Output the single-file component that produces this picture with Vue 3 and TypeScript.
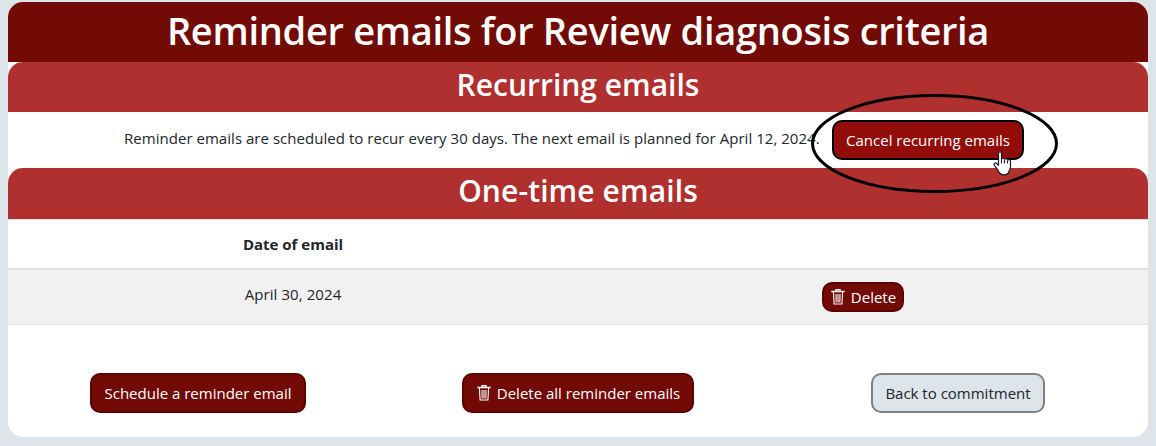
<script setup lang="ts">
const recurrence = { days: 30, next: 'April 12, 2024' }
const reminders: string[] = ['April 30, 2024']
</script>

<template>
  <main class="page">
    <section class="card">
      <h1><span>Reminder emails for Review diagnosis criteria</span></h1>
      <h2><span>Recurring emails</span></h2>
      <div class="recurring">
        <p>Reminder emails are scheduled to recur every {{ recurrence.days }} days. The next email is planned for {{ recurrence.next }}.</p>
        <div class="cancel-wrap">
          <button class="btn cancel"><span>Cancel recurring emails</span></button>
          <svg class="ring" width="252" height="104" viewBox="0 0 252 104">
            <ellipse cx="125.5" cy="51.5" rx="122" ry="48" fill="none" stroke="#000" stroke-width="3" />
          </svg>
          <svg class="pointer" width="20" height="26" viewBox="0 0 20 26">
            <path d="M5.500 2.200C5.500.3 8.500.3 8.500 2.200V8c.3-1.400 3-1.300 3 .4.4-1.200 3-1 3 .8.500-1 3-.8 3 1V16c0 2-1.200 3.200-1.700 5-.5 1.800-2.800 2.800-4.800 2.800s-4.200-1-5-2.800C5 18.500 2.800 16.500 1.300 14.200.4 12.400 2.200 11.200 3.800 12.500l1.700 1.600z" fill="#fff" stroke="#1c1c2c" stroke-width="1.200" />
            <path d="M8.500 8v4.500M11.500 8.500v4M14.500 9.500v3" stroke="#1c1c2c" stroke-width="1.100" fill="none" />
          </svg>
        </div>
      </div>
      <h2 class="once"><span>One-time emails</span></h2>
      <table>
        <thead>
          <tr><th><span>Date of email</span></th><th></th></tr>
        </thead>
        <tbody>
          <tr v-for="date in reminders" :key="date">
            <td><span class="date">{{ date }}</span></td>
            <td class="action">
              <button class="btn small">
                <svg class="trash" width="16" height="16" viewBox="0 0 16 16">
                  <path d="M6 2V.7h4V2M1.300 2.500h13.400" fill="none" stroke="#fff" stroke-width="1.300" />
                  <path d="M3.400 3l.7 12h7.800l.7-12M6 5l.2 8.500M8 5v8.500M10 5l-.2 8.500" fill="none" stroke="#fff" stroke-width="1.100" />
                </svg>
                <span>Delete</span>
              </button>
            </td>
          </tr>
        </tbody>
      </table>
      <footer>
        <div><button class="btn schedule"><span>Schedule a reminder email</span></button></div>
        <div>
          <button class="btn all">
            <svg class="trash" width="16" height="16" viewBox="0 0 16 16">
              <path d="M6 2V.7h4V2M1.300 2.500h13.400" fill="none" stroke="#fff" stroke-width="1.300" />
              <path d="M3.400 3l.7 12h7.800l.7-12M6 5l.2 8.500M8 5v8.500M10 5l-.2 8.500" fill="none" stroke="#fff" stroke-width="1.100" />
            </svg>
            <span>Delete all reminder emails</span>
          </button>
        </div>
        <div><button class="btn back"><span>Back to commitment</span></button></div>
      </footer>
    </section>
  </main>
</template>

<style>
body { background: #dde4ea; overflow: hidden; }
</style>

<style scoped>
* { box-sizing: border-box; }
.page {
  height: 446px;
  padding: 2px 8px 0;
  background: #dde4ea;
  font-family: "Segoe UI", "Open Sans", "Noto Sans", sans-serif;
  font-size: 15px;
  line-height: 24px;
  color: #212529;
}
.card { height: 435px; background: #fff; border-radius: 15px; }
h1, h2 { margin: 0; color: #fff; font-weight: 600; text-align: center; border-radius: 15px 15px 0 0; white-space: nowrap; }
h1 { height: 60px; line-height: 57px; font-size: 38px; letter-spacing: -0.3px; background: #720a06; }
h2 { height: 50px; line-height: 46px; font-size: 30px; background: #b03030; }
h2.once { height: 51px; letter-spacing: 0.1px; }
.recurring { height: 56px; display: flex; justify-content: center; align-items: center; gap: 12px; padding-right: 8px; }
p { margin: 0 0 5px; width: 696px; white-space: nowrap; letter-spacing: 0.035px; }
.cancel-wrap { position: relative; height: 40px; }
.ring { position: absolute; left: -23px; top: -28px; z-index: 2; }
.pointer { position: absolute; left: 161px; top: 31px; z-index: 3; }
.btn {
  display: inline-flex; align-items: center; justify-content: center;
  height: 40px; padding: 0; gap: 5px;
  font: inherit; color: #fff; white-space: nowrap;
  background: #720a06; border: 2px solid #5c0202; border-radius: 10px;
}
.cancel { width: 192px; background: #920c09; border-color: #000; }
.schedule { width: 216px; }
.all { width: 232px; }
.back { width: 174px; background: #dde4ea; color: #212529; border-color: #808080; }
.small { width: 82px; height: 30px; }
.trash { flex: none; }
table { width: 100%; border-collapse: separate; border-spacing: 0; table-layout: fixed; border-top: 1px solid #dee2e6; }
th, td { padding: 0; text-align: center; }
th { height: 50px; border-bottom: 2px solid #dee2e6; font-weight: 700; }
td { height: 55px; background: #f1f1f1; border-bottom: 1px solid #dee2e6; vertical-align: top; padding-top: 12px; }
.date { letter-spacing: 0.08px; }
td.action { line-height: 0; }
.action .btn { line-height: 24px; }
footer { display: grid; grid-template-columns: repeat(3, 1fr); margin-top: 48px; }
footer div { display: flex; justify-content: center; }
</style>
